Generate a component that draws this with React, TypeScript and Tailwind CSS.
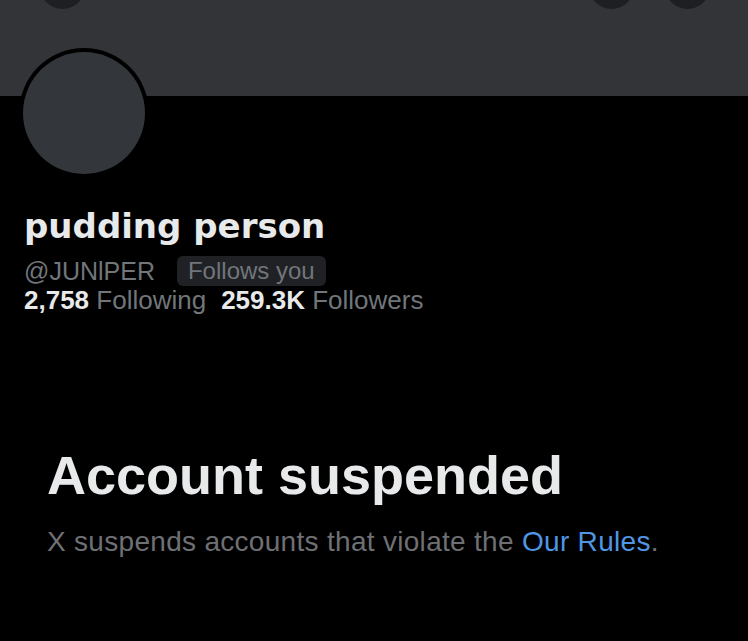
export default function App() {
  return (
    <div
      className="w-[748px] h-[641px] bg-black overflow-hidden"
      style={{ fontFamily: '"Liberation Sans", Arial, sans-serif' }}
    >
      {/* banner */}
      <div className="relative h-[96px] bg-[#333438]">
        <div className="absolute left-[40px] -top-[36px] size-[45px] rounded-full bg-[#1e1f22]" />
        <div className="absolute left-[589px] -top-[36px] size-[45px] rounded-full bg-[#1e1f22]" />
        <div className="absolute left-[665px] -top-[36px] size-[45px] rounded-full bg-[#1e1f22]" />
        <div className="absolute left-[19px] top-[48px] size-[130px] rounded-full bg-black p-[4px]">
          <div className="size-full rounded-full bg-[#33363b]" />
        </div>
      </div>

      <div className="pl-[24px] pt-[110px]">
        <h1 className="font-['DejaVu_Sans',sans-serif] text-[34px] font-bold leading-[40px] text-[#e7e9ea]">
          pudding person
        </h1>
        <div className="mt-[10px] flex h-[30px] items-center gap-[22px]">
          <span className="text-[25px] leading-[30px] text-[#71767b]">@JUNlPER</span>
          <span className="h-[30px] rounded-[6px] bg-[#1f2125] px-[11px] text-[24px] leading-[30px] text-[#71767b]">
            Follows you
          </span>
        </div>
        <div className="flex items-center gap-[15px] text-[26px] leading-[28px]">
          <span>
            <b className="text-[#e7e9ea]">2,758</b> <span className="text-[#71767b]">Following</span>
          </span>
          <span>
            <b className="text-[#e7e9ea]">259.3K</b> <span className="text-[#71767b]">Followers</span>
          </span>
        </div>
      </div>

      <div className="pl-[47px] pt-[131px]">
        <h2 className="text-[54px] font-bold leading-[60px] text-[#e7e9ea]">Account suspended</h2>
        <p className="mt-[21px] text-[28px] leading-[32px] tracking-[0.3px] text-[#6e7074]">
          X suspends accounts that violate the <span className="text-[#5096e4]">Our Rules</span>.
        </p>
      </div>
    </div>
  );
}
